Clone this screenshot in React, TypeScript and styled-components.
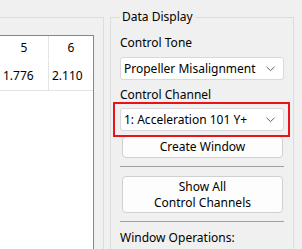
import React from 'react'
import styled, { createGlobalStyle } from 'styled-components'

const Global = createGlobalStyle`
  html, body {
    margin: 0;
    padding: 0;
    background: #f0f0f0;
    overflow: hidden;
  }
  body {
    font-family: "Noto Sans", "Open Sans", sans-serif;
    font-size: 12px;
    color: #000;
  }
`

const Page = styled.div`
  display: flex;
  width: 302px;
  height: 249px;
  overflow: hidden;
`

const LeftPanel = styled.div`
  width: 94px;
  margin-top: 17px;
  padding: 17px 9px 0 0;
  border-top: 1px solid #dcdcdc;
  border-right: 1px solid #dcdcdc;
  flex-shrink: 0;
`

const Grid = styled.div`
  height: 100%;
  background: #fff;
  border-top: 1px solid #828790;
  border-right: 1px solid #828790;
`

const Row = styled.div<{ $h: number; $line?: boolean }>`
  display: grid;
  grid-template-columns: 49px 1fr;
  height: ${(p) => p.$h}px;
  border-bottom: 1px solid ${(p) => (p.$line ? '#e3e3e3' : 'transparent')};
`

const Cell = styled.div<{ $head?: boolean; $last?: boolean }>`
  display: flex;
  align-items: center;
  justify-content: ${(p) => (p.$head ? 'center' : 'flex-start')};
  padding-left: ${(p) => (p.$head ? 0 : 3)}px;
  border-right: ${(p) => (p.$last ? 'none' : '1px solid #e3e3e3')};
  font-size: 12px;
`

const Group = styled.fieldset`
  width: 164px;
  margin: 9px 0 0 6px;
  padding: 0 9px;
  border: 1px solid #dcdcdc;
  border-bottom: none;
  display: flex;
  flex-direction: column;
  flex-shrink: 0;
`

const Legend = styled.legend`
  padding: 0 2px;
  margin-left: 0;
  line-height: 16px;
`

const Label = styled.div<{ $top: number }>`
  line-height: 16px;
  margin-top: ${(p) => p.$top}px;
  white-space: nowrap;
`

const ComboWrap = styled.div<{ $top: number }>`
  position: relative;
  margin-top: ${(p) => p.$top}px;
`

const Combo = styled.div`
  height: 21px;
  background: #fff;
  border: 1px solid #d9d9d9;
  border-radius: 3px;
  display: flex;
  align-items: center;
  justify-content: space-between;
  padding: 0 8px 0 3px;
  white-space: nowrap;
`

const Highlight = styled.div`
  position: absolute;
  top: -6px;
  left: -7px;
  right: -6px;
  bottom: -6px;
  border: 2px solid #e8141a;
  pointer-events: none;
`

const Button = styled.div<{ $top: number; $h: number }>`
  margin: ${(p) => p.$top}px 1px 0 2px;
  height: ${(p) => p.$h - 2}px;
  background: #fdfdfd;
  border: 1px solid #d0d0d0;
  border-radius: 4px;
  display: flex;
  flex-direction: column;
  align-items: center;
  justify-content: center;
  line-height: 16px;
  text-align: center;
`

const Separator = styled.div<{ $top: number }>`
  margin-top: ${(p) => p.$top}px;
  height: 1px;
  background: #a0a0a0;
`

function Chevron() {
  return (
    <svg width="9" height="6" viewBox="0 0 9 6">
      <polyline points="0.5,0.8 4.5,4.6 8.5,0.8" fill="none" stroke="#606060" strokeWidth="1" />
    </svg>
  )
}

export default function App() {
  return (
    <Page>
      <Global />
      <LeftPanel>
        <Grid>
          <Row $h={23}>
            <Cell $head>5</Cell>
            <Cell $head $last>6</Cell>
          </Row>
          <Row $h={30} $line>
            <Cell>1.776</Cell>
            <Cell $last>2.110</Cell>
          </Row>
        </Grid>
      </LeftPanel>
      <Group>
        <Legend>Data Display</Legend>
        <Label $top={10}>Control Tone</Label>
        <ComboWrap $top={6}>
          <Combo>
            <span>Propeller Misalignment</span>
            <Chevron />
          </Combo>
        </ComboWrap>
        <Label $top={7}>Control Channel</Label>
        <ComboWrap $top={5}>
          <Combo>
            <span>1: Acceleration 101 Y+</span>
            <Chevron />
          </Combo>
          <Highlight />
        </ComboWrap>
        <Button $top={5} $h={22}>Create Window</Button>
        <Separator $top={8} />
        <Button $top={9} $h={37}>
          <span>Show All</span>
          <span>Control Channels</span>
        </Button>
        <Separator $top={8} />
        <Label $top={8}>Window Operations:</Label>
      </Group>
    </Page>
  )
}
